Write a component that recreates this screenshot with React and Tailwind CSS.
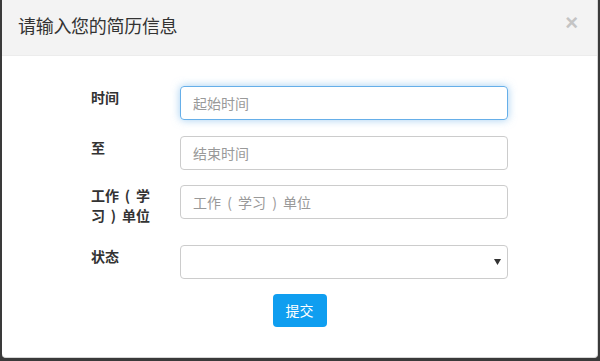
function P({ c }) {
  return <span className="inline-block w-[17px] text-center">{c}</span>;
}

export default function App() {
  const font = "font-['Noto_Sans_CJK_SC',sans-serif]";
  return (
    <div className={`w-[600px] h-[361px] bg-[#3a3a3a] pl-[2px] ${font}`}>
      <div className="w-[596px] h-[358px] bg-white border-r border-b border-[#d6d6d6] rounded-b-[4px] flex flex-col overflow-hidden">
        <div className="h-[56px] bg-[#f3f3f3] border-b border-[#ececec] flex items-start justify-between pl-[16px] pr-[19px] pt-[13px] shrink-0">
          <div className="text-[18px] leading-[24px] text-[#333] tracking-[-0.3px]">请输入您的简历信息</div>
          <div className="text-[22px] leading-[20px] font-bold text-[#c4c4c4] font-['Liberation_Sans',sans-serif]">×</div>
        </div>
        <div className="flex flex-col pt-[30px]">
          <div className="flex ml-[89px]">
            <div className="w-[89px] pr-[24px] pt-[1px] text-[14px] leading-[20px] font-bold text-[#333]">时间</div>
            <div className="w-[328px] h-[34px] rounded-[4px] border border-[#66afe9] shadow-[0_0_8px_rgba(102,175,233,0.6)] flex items-center pl-[12px] text-[14px] text-[#999]">起始时间</div>
          </div>
          <div className="flex ml-[89px] mt-[16px]">
            <div className="w-[89px] pr-[24px] pt-[1px] text-[14px] leading-[20px] font-bold text-[#333]">至</div>
            <div className="w-[328px] h-[34px] rounded-[4px] border border-[#ccc] flex items-center pl-[12px] text-[14px] text-[#999]">结束时间</div>
          </div>
          <div className="flex ml-[89px] mt-[15px]">
            <div className="w-[89px] pr-[24px] text-[14px] leading-[20px] font-bold text-[#333]">工作<P c="(" />学习<P c=")" />单位</div>
            <div className="w-[328px] h-[34px] rounded-[4px] border border-[#ccc] flex items-center pl-[12px] text-[14px] text-[#999]"><span>工作<P c="(" />学习<P c=")" />单位</span></div>
          </div>
          <div className="flex ml-[89px] mt-[20px]">
            <div className="w-[89px] pr-[24px] pt-[1px] text-[14px] leading-[20px] font-bold text-[#333]">状态</div>
            <div className="w-[328px] h-[34px] rounded-[4px] border border-[#ccc] flex items-center justify-end pr-[6px]">
              <svg width="7" height="6" viewBox="0 0 7 6"><polygon points="0,0 7,0 3.5,6" fill="#333" /></svg>
            </div>
          </div>
          <div className="flex justify-center mt-[15px]">
            <div className="w-[54px] h-[33px] rounded-[4px] bg-[#0f9ef0] text-white text-[14px] flex items-center justify-center">提交</div>
          </div>
        </div>
      </div>
    </div>
  );
}
